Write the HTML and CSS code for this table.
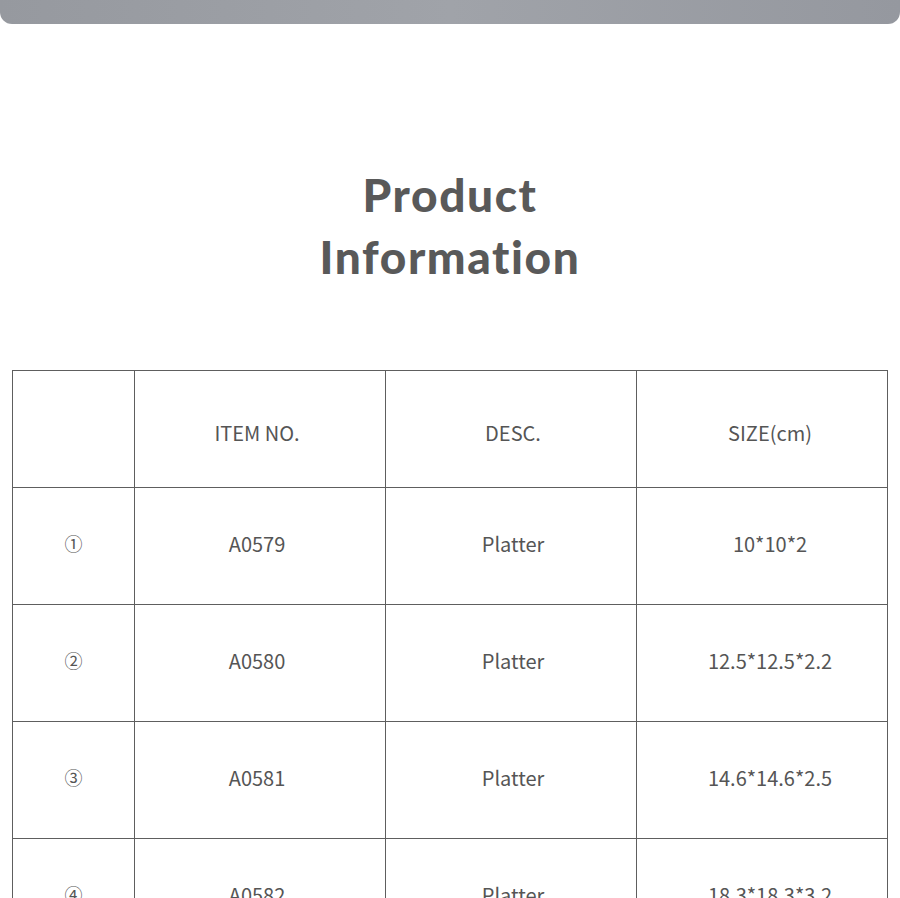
FILE: index.html
```html
<!DOCTYPE html>
<html>
<head>
<meta charset="utf-8">
<link rel="stylesheet" href="styles.css">
</head>
<body>
<div class="topbar"></div>
<h1 class="title">Product<br>Information</h1>
<table class="info">
  <tr class="head"><td class="idx"></td><td class="c2">ITEM NO.</td><td class="c3">DESC.</td><td class="c4">SIZE(cm)</td></tr>
  <tr><td class="idx">①</td><td class="c2">A0579</td><td class="c3">Platter</td><td class="c4">10*10*2</td></tr>
  <tr><td class="idx">②</td><td class="c2">A0580</td><td class="c3">Platter</td><td class="c4">12.5*12.5*2.2</td></tr>
  <tr><td class="idx">③</td><td class="c2">A0581</td><td class="c3">Platter</td><td class="c4">14.6*14.6*2.5</td></tr>
  <tr><td class="idx">④</td><td class="c2">A0582</td><td class="c3">Platter</td><td class="c4">18.3*18.3*3.2</td></tr>
</table>
</body>
</html>
```
FILE: styles.css
```css
html, body { margin: 0; padding: 0; background: #fff; }
body { overflow: hidden; height: 898px; }
.topbar {
  height: 24px;
  background: linear-gradient(90deg, #96999f 0%, #a0a3a9 50%, #95989f 100%);
  border-radius: 0 0 12px 12px;
}
.title {
  margin: 140px 0 0 0;
  text-align: center;
  font-family: "Lato", sans-serif;
  font-weight: 900;
  font-size: 46px;
  line-height: 62px;
  letter-spacing: 1.6px;
  font-variant-ligatures: none;
  color: #595959;
}
.info {
  margin: 82px 0 0 12px;
  border-collapse: collapse;
  table-layout: fixed;
  font-family: "Noto Sans CJK SC", "Noto Sans", sans-serif;
  font-size: 20px;
  color: #555;
}
.info td {
  border: 1px solid #5e5e5e;
  width: 250px;
  height: 110px;
  text-align: center;
  vertical-align: middle;
  padding: 0 0 6px 0;
  box-sizing: content-box;
}
.info tr.head td { padding-top: 6px; padding-bottom: 0; }
.info td.idx { width: 121px; font-size: 18px; }
.info td.c2 { width: 244px; padding-right: 6px; }
.info td.c3 { width: 246px; padding-left: 4px; }
.info td.c4 { width: 234px; padding-left: 16px; }
```
